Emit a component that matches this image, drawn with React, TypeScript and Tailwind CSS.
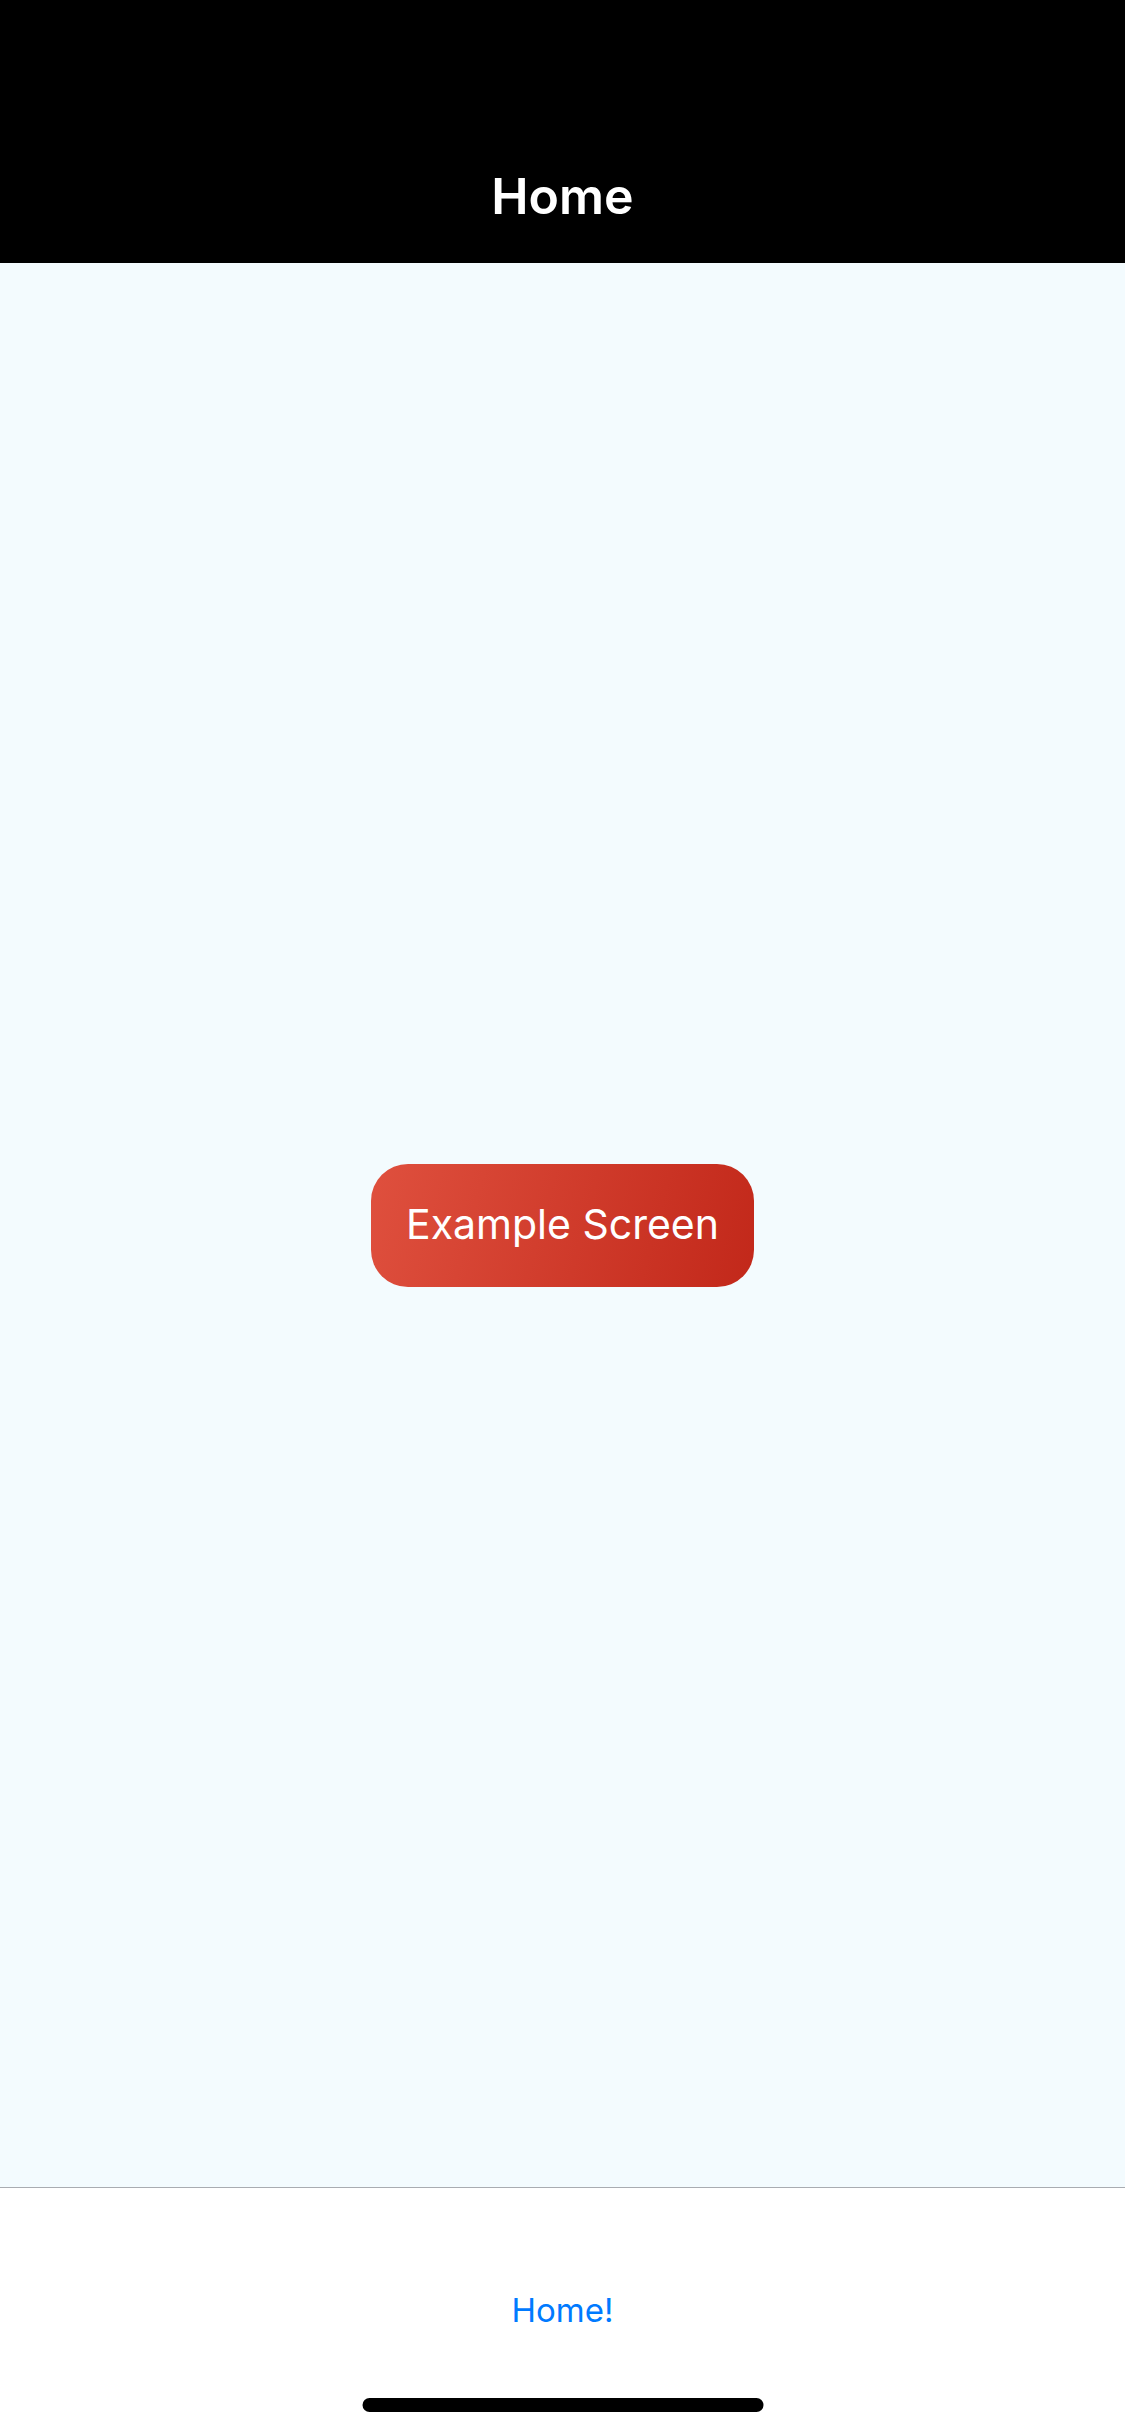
const App = () => {
  return (
    <div
      className="relative flex h-[2436px] w-full flex-col"
      style={{ fontFamily: "Inter, 'Noto Sans', sans-serif" }}
    >
      {/* Header */}
      <header className="flex h-[263px] flex-col justify-end bg-black">
        <div className="flex h-[134px] items-center justify-center">
          <h1 className="text-[50px] font-semibold leading-none text-white">
            Home
          </h1>
        </div>
      </header>

      {/* Content */}
      <main className="flex flex-1 items-center justify-center bg-[#f3fbfe]">
        <button
          type="button"
          className="flex h-[123px] w-[383px] items-center justify-center rounded-[37px] bg-linear-[105deg] from-[#df503e] to-[#c2281a] text-[41px] font-normal text-white"
        >
          Example Screen
        </button>
      </main>

      {/* Tab bar */}
      <nav className="h-[249px] border-t border-[#a9acb1] bg-white">
        <div className="flex h-[244px] items-center justify-center">
          <span className="text-[33px] leading-none text-[#007aff]">Home!</span>
        </div>
      </nav>

      {/* Home indicator */}
      <div className="absolute bottom-[24px] left-1/2 h-[14px] w-[401px] -translate-x-1/2 rounded-full bg-black" />
    </div>
  );
};

export default App;
